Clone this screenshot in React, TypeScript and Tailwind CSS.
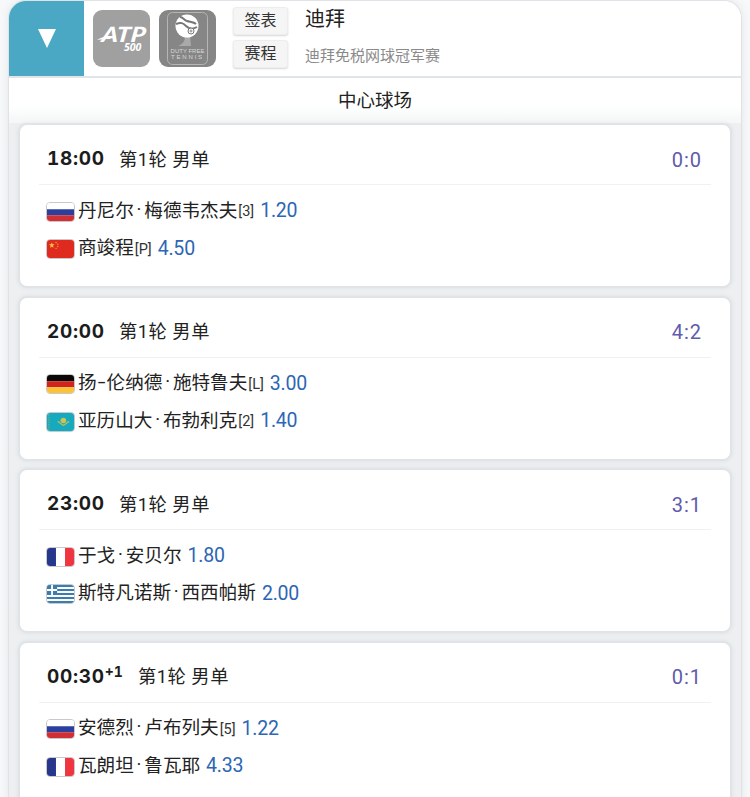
import type { ReactNode } from 'react'

type Country = 'ru' | 'cn' | 'de' | 'kz' | 'fr' | 'gr'

interface Player {
  country: Country
  name: string
  seed?: string
  odds: string
}

interface Match {
  time: string
  dayOffset?: string
  round: string
  score: string
  players: Player[]
}

const MATCHES: Match[] = [
  {
    time: '18:00',
    round: '第1轮 男单',
    score: '0:0',
    players: [
      { country: 'ru', name: '丹尼尔·梅德韦杰夫', seed: '3', odds: '1.20' },
      { country: 'cn', name: '商竣程', seed: 'P', odds: '4.50' },
    ],
  },
  {
    time: '20:00',
    round: '第1轮 男单',
    score: '4:2',
    players: [
      { country: 'de', name: '扬-伦纳德·施特鲁夫', seed: 'L', odds: '3.00' },
      { country: 'kz', name: '亚历山大·布勃利克', seed: '2', odds: '1.40' },
    ],
  },
  {
    time: '23:00',
    round: '第1轮 男单',
    score: '3:1',
    players: [
      { country: 'fr', name: '于戈·安贝尔', odds: '1.80' },
      { country: 'gr', name: '斯特凡诺斯·西西帕斯', odds: '2.00' },
    ],
  },
  {
    time: '00:30',
    dayOffset: '+1',
    round: '第1轮 男单',
    score: '0:1',
    players: [
      { country: 'ru', name: '安德烈·卢布列夫', seed: '5', odds: '1.22' },
      { country: 'fr', name: '瓦朗坦·鲁瓦耶', odds: '4.33' },
    ],
  },
]

const FLAGS: Record<Country, ReactNode> = {
  ru: (
    <>
      <path fill="#fff" d="M0 0h28v19H0z" />
      <path fill="#2b3f9e" d="M0 6.5h28V13H0z" />
      <path fill="#cf2f35" d="M0 13h28v6H0z" />
    </>
  ),
  cn: (
    <>
      <path fill="#df2a20" d="M0 0h28v19H0z" />
      <path fill="#f5c536" d="m5 2.4.8 2.1 2.2.1-1.8 1.4.6 2.2L5 7l-1.8 1.2.6-2.2L2 4.6l2.2-.1z" />
      <circle cx="9.4" cy="2.6" r=".7" fill="#f5a536" />
      <circle cx="11.2" cy="4.4" r=".7" fill="#f5a536" />
      <circle cx="11.2" cy="6.9" r=".7" fill="#f5a536" />
      <circle cx="9.4" cy="8.8" r=".7" fill="#f5a536" />
    </>
  ),
  de: (
    <>
      <path fill="#0b0808" d="M0 0h28v6.5H0z" />
      <path fill="#d2231c" d="M0 6.5h28V13H0z" />
      <path fill="#fcc238" d="M0 13h28v6H0z" />
    </>
  ),
  kz: (
    <>
      <path fill="#17a9be" d="M0 0h28v19H0z" />
      <path stroke="#7db98a" strokeDasharray="1.5 1" d="M2 1.5v16" />
      <circle cx="17" cy="8" r="2.9" fill="#c9c455" />
      <path fill="none" stroke="#a9bd62" strokeWidth="1.4" d="M11 9c2 .3 3 3 6 4 3-1 4-3.700 6-4" />
    </>
  ),
  fr: (
    <>
      <path fill="#fff" d="M0 0h28v19H0z" />
      <path fill="#27378b" d="M0 0h9.300v19H0z" />
      <path fill="#ee3540" d="M18.700 0H28v19h-9.300z" />
    </>
  ),
  gr: (
    <>
      <path fill="#fff" d="M0 0h28v19H0z" />
      <path stroke="#3a7eb0" strokeWidth="2.1" d="M0 1.050h28M0 5.270h28M0 9.500h28M0 13.720h28M0 17.950h28" />
      <path fill="#3a7eb0" d="M0 0h10.500v10.550H0z" />
      <path stroke="#fff" strokeWidth="2" d="M5.250 0v10.550M0 5.270h10.500" />
    </>
  ),
}

function Flag({ country }: { country: Country }) {
  return (
    <span className="mt-[2px] mr-[3px] h-5 w-[29px] shrink-0 overflow-hidden rounded-[4px] border border-[#c9c9cc]">
      <svg viewBox="0 0 28 19" preserveAspectRatio="none" className="block h-full w-full">
        {FLAGS[country]}
      </svg>
    </span>
  )
}

function PlayerName({ name }: { name: string }) {
  return (
    <span className="flex text-[18.600px] text-[#222]">
      {name.split(/([·-])/).map((part, i) => {
        if (part === '·') {
          return (
            <span key={i} className="w-[10.500px] text-center font-['Roboto']">
              ·
            </span>
          )
        }
        if (part === '-') {
          return (
            <span key={i} className="flex w-[10px] justify-center">
              <span className="scale-x-150 font-['Roboto']">-</span>
            </span>
          )
        }
        return <span key={i}>{part}</span>
      })}
    </span>
  )
}

function MatchCard({ match }: { match: Match }) {
  return (
    <div className="h-[165px] shrink-0 rounded-[9px] border-2 border-[#e0e4e7] bg-white px-[19px] shadow-[0_0_4px_rgba(120,130,140,0.12)]">
      <div className="flex h-[60px] items-center border-b border-[#f0f1f2] pt-[10px] pr-[9px] pl-2">
        <span className="relative w-[57px] font-['Inter'] text-[19px] font-bold tracking-[0.700px] whitespace-nowrap text-[#1c1c1c] tabular-nums">
          {match.time}
          {match.dayOffset && <sup className="-top-[6px] text-[14px] tracking-normal">{match.dayOffset}</sup>}
        </span>
        <span
          className={
            match.dayOffset
              ? "ml-[34px] font-['Roboto','Noto_Sans_CJK_SC',sans-serif] text-[18.300px] tracking-[0.500px]"
              : "ml-[15px] font-['Roboto','Noto_Sans_CJK_SC',sans-serif] text-[18.300px] tracking-[0.500px]"
          }
        >
          {match.round}
        </span>
        <span className="ml-auto font-['Roboto'] text-[20px] tracking-[1px] text-[#605bab]">{match.score}</span>
      </div>
      <div className="pt-[7px] pl-[7px]">
        {match.players.map((player) => (
          <div key={player.name} className="flex h-[37.500px] items-center">
            <Flag country={player.country} />
            <PlayerName name={player.name} />
            {player.seed && <span className="mt-[3px] ml-px font-['Roboto'] text-[14.500px] text-[#333]">[{player.seed}]</span>}
            <span className="ml-[6px] font-['Roboto'] text-[19.500px] tracking-[-0.200px] text-[#2c66b4]">{player.odds}</span>
          </div>
        ))}
      </div>
    </div>
  )
}

function AtpLogo() {
  return (
    <div className="relative h-[57px] w-[57px] rounded-[9px] bg-[#a0a0a0] text-white">
      <svg viewBox="0 0 57 57" className="absolute inset-0">
        <path fill="#fff" d="M4 30c5-3 9-4 15-4l-2 3c-5 0-8 0-13 1z" />
      </svg>
      <span className="absolute top-[10px] left-[9px] origin-left scale-x-[1.2] -skew-x-6 font-['Lato'] text-[21px] leading-[28px] font-black italic">
        ATP
      </span>
      <span className="absolute top-[31px] left-[31px] font-['Open_Sans'] text-[10.500px] leading-[13px] font-bold italic">500</span>
    </div>
  )
}

function DubaiLogo() {
  return (
    <div className="relative h-[57px] w-[57px] rounded-[9px] bg-[#868686] text-[#d8d8d8]">
      <svg viewBox="0 0 57 57" fill="none" className="absolute inset-0">
        <rect x="8.500" y="2.500" width="40" height="52" rx="5" stroke="#b5b5b5" />
        <path fill="#aaa" d="m26 26 5-1 1 11H19c5-2 7-5 7-10z" />
        <circle cx="28" cy="16" r="11.500" fill="#fff" />
        <path stroke="#777" strokeWidth="2" d="M17 14c5-2 7-1 10 2s6 4 11 1M21 7c3 0 4 3 7 4s7 1 9 3" />
        <circle cx="32" cy="21" r="3" fill="#fff" stroke="#777" />
        <path stroke="#777" strokeWidth=".8" d="M30.500 21h3M32 19.500v3" />
      </svg>
      <div className="absolute inset-x-0 top-[38px] text-center font-['Liberation_Sans'] text-[6px] leading-[6px] whitespace-nowrap">
        <div>DUTY FREE</div>
        <div className="tracking-[1.800px]">TENNIS</div>
      </div>
    </div>
  )
}

function HeaderButton({ children }: { children: ReactNode }) {
  return (
    <button
      type="button"
      className="h-7 w-[55px] rounded-[3px] border border-[#ededed] bg-[#f5f5f5] pb-[2px] text-[16px] leading-[24px] text-[#333] shadow-[0_1px_2px_rgba(0,0,0,0.16)]"
    >
      {children}
    </button>
  )
}

export default function App() {
  return (
    <div className="h-[797px] overflow-hidden bg-[#f7f8f9] px-2 font-['Inter','Noto_Sans_CJK_SC',sans-serif] text-[#222]">
      <div className="flex h-[820px] flex-col overflow-hidden rounded-t-[18px] border border-b-0 border-[#dfe3e7] bg-[#edeff1] shadow-[0_0_8px_rgba(100,110,120,0.12)]">
        <header className="flex h-[77px] shrink-0 border-b-2 border-[#e2e5e8] bg-white">
          <div className="flex h-[75px] w-[75px] items-center justify-center bg-[#4aa8c5]">
            <svg viewBox="0 0 18 19" className="h-[19px] w-[18px]">
              <path fill="#fff" d="M0 0h18L9 19z" />
            </svg>
          </div>
          <div className="mt-[9px] ml-[9px] flex gap-[9px]">
            <AtpLogo />
            <DubaiLogo />
          </div>
          <div className="mt-[6px] ml-[17px] flex flex-col gap-[5px]">
            <HeaderButton>签表</HeaderButton>
            <HeaderButton>赛程</HeaderButton>
          </div>
          <div className="ml-[17px] pt-[3px]">
            <h1 className="text-[20px] leading-[30px]">迪拜</h1>
            <p className="mt-[11px] text-[15px] leading-[22px] text-[#8a8a8a]">迪拜免税网球冠军赛</p>
          </div>
        </header>
        <h2 className="h-[45px] shrink-0 bg-linear-to-b from-white from-60% to-[#f4f6f7] text-center text-[18.500px] leading-[45px]">
          中心球场
        </h2>
        <main className="flex flex-col gap-[7.500px] px-[9px]">
          {MATCHES.map((match) => (
            <MatchCard key={match.time} match={match} />
          ))}
        </main>
      </div>
    </div>
  )
}
